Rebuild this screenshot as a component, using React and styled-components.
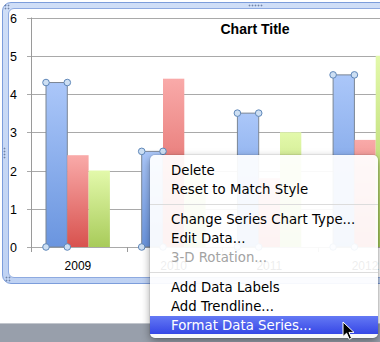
import styled, { createGlobalStyle } from "styled-components"

const GlobalStyle = createGlobalStyle`
    html, body {
        margin: 0;
        padding: 0;
        background: #ffffff;
        overflow: hidden;
    }
    body {
        width: 380px;
        height: 342px;
        font-family: "Liberation Sans", Arial, sans-serif;
    }
`

const Stage = styled.div`
    position: relative;
    width: 380px;
    height: 342px;
    display: flex;
    flex-direction: column;
    overflow: hidden;
`
const Workspace = styled.div`
    flex: 1;
    padding: 2px 0 0 2px;
    background: #ffffff;
`
const ChartFrame = styled.div`
    position: relative;
    width: 420px;
    height: 282px;
    box-sizing: border-box;
    padding: 5px;
    border: 1px solid #7c9ddb;
    border-radius: 9px;
    background: linear-gradient(#cfdef7, #bfd2f3);
`
const ChartArea = styled.div`
    height: 100%;
    box-sizing: border-box;
    border: 1px solid #8eaae0;
    border-radius: 6px;
    background: #ffffff;
    overflow: hidden;

    svg {
        display: block;
    }
`
// little dotted resize grips sitting on the frame border
const Grip = styled.div`
    position: absolute;
    left: ${p => p.$x}px;
    top: ${p => p.$y}px;
    width: ${p => p.$w}px;
    height: ${p => p.$h}px;
    background-image: radial-gradient(circle, #5a6f95 0.8px, transparent 1.1px);
    background-size: 3px 3px;
    opacity: 0.8;
`
const StatusBar = styled.div`
    height: 18px;
    border-top: 1px solid #c2c6cd;
    background: #989fab;
`
const Menu = styled.div`
    position: absolute;
    left: 150px;
    top: 155px;
    width: 228px;
    padding: 6px 0 4px;
    border-radius: 5px;
    background: rgba(255, 255, 255, 0.93);
    box-shadow: 0 3px 9px rgba(0, 0, 0, 0.38), 0 0 0 1px rgba(0, 0, 0, 0.06);
    font-family: "DejaVu Sans", "Liberation Sans", sans-serif;
    font-size: 13.3px;
`
const Item = styled.div`
    height: ${p => (p.$active ? 18 : 19)}px;
    line-height: 19px;
    padding-left: 21px;
    white-space: nowrap;
    color: ${p => (p.$active ? "#ffffff" : p.$disabled ? "#a3a3a3" : "#000000")};
    background: ${p => (p.$active ? "linear-gradient(#6479f4, #3647e6)" : "transparent")};
`
const Separator = styled.div`
    height: 1px;
    margin: 5px 0;
    background: #dcdcdc;
`
const Cursor = styled.svg`
    position: absolute;
    left: 342px;
    top: 321px;
`

const values = {
    blue: [4.3, 2.5, 3.5, 4.5],
    red: [2.4, 4.4, 1.8, 2.8],
    green: [2.0, 2.0, 3.0, 5.0],
}
const fills = { blue: "url(#gBlue)", red: "url(#gRed)", green: "url(#gGreen)" }
const years = ["2009", "2010", "2011", "2012"]
const base = 247
const unit = 38.25
const catW = 95.7
const barW = 21.3
const yOf = v => base - v * unit
const crisp = v => Math.round(v) + 0.5

function Chart() {
    const series = ["blue", "red", "green"]
    return (
        <svg width="406" height="268" viewBox="9 9 406 268">
            <defs>
                <linearGradient id="gBlue" x1="0" y1="0" x2="0" y2="1">
                    <stop offset="0" stopColor="#abc7f9" />
                    <stop offset="1" stopColor="#6a95df" />
                </linearGradient>
                <linearGradient id="gRed" x1="0" y1="0" x2="0" y2="1">
                    <stop offset="0" stopColor="#f9aaa9" />
                    <stop offset="1" stopColor="#d8524e" />
                </linearGradient>
                <linearGradient id="gGreen" x1="0" y1="0" x2="0" y2="1">
                    <stop offset="0" stopColor="#e3f9ab" />
                    <stop offset="1" stopColor="#a8cb5a" />
                </linearGradient>
            </defs>

            {[0, 1, 2, 3, 4, 5, 6].map(v => (
                <g key={v}>
                    <line x1="27" x2="420" y1={crisp(yOf(v))} y2={crisp(yOf(v))} stroke="#a9a9a9" />
                    <text x="17" y={yOf(v) + 5} textAnchor="end" fontSize="12.5" fill="#000">{v}</text>
                </g>
            ))}
            <line x1="31.5" x2="31.5" y1={yOf(6)} y2={base + 4} stroke="#9a9a9a" />
            {[0, 1, 2, 3, 4].map(i => (
                <line key={i} x1={crisp(31 + i * catW)} x2={crisp(31 + i * catW)} y1={base} y2={base + 5} stroke="#9a9a9a" />
            ))}

            <text x="255" y="33.5" textAnchor="middle" fontSize="14" fontWeight="bold" fill="#000">Chart Title</text>

            {years.map((y, i) => {
                const x0 = 31 + i * catW + 15
                return (
                    <g key={y}>
                        {series.map((s, j) => {
                            const t = yOf(values[s][i])
                            return (
                                <rect
                                    key={s}
                                    x={x0 + j * barW}
                                    y={t}
                                    width={barW}
                                    height={base - t}
                                    fill={fills[s]}
                                    stroke={s === "blue" ? "#7b8594" : "none"}
                                />
                            )
                        })}
                        <text x={x0 + barW * 1.5} y="269.5" textAnchor="middle" fontSize="12" fill="#000">{y}</text>
                    </g>
                )
            })}

            {/* selection handles on the selected (blue) series */}
            {years.map((y, i) => {
                const x0 = 31 + i * catW + 15
                const t = yOf(values.blue[i])
                return [[x0, t], [x0 + barW, t], [x0, base], [x0 + barW, base]].map(([cx, cy], k) => (
                    <circle key={y + k} cx={cx} cy={cy} r="3.3" fill="#cddff3" stroke="#5f87b9" />
                ))
            })}
        </svg>
    )
}

export default function App() {
    return (
        <Stage>
            <GlobalStyle />
            <Workspace>
                <ChartFrame>
                    <ChartArea>
                        <Chart />
                    </ChartArea>
                    <Grip $x={1} $y={1} $w={6} $h={6} />
                    <Grip $x={245} $y={1} $w={15} $h={3} />
                    <Grip $x={0} $y={144} $w={3} $h={12} />
                    <Grip $x={2} $y={273} $w={6} $h={6} />
                </ChartFrame>
            </Workspace>
            <StatusBar />
            <Menu>
                <Item>Delete</Item>
                <Item>Reset to Match Style</Item>
                <Separator />
                <Item>Change Series Chart Type...</Item>
                <Item>Edit Data...</Item>
                <Item $disabled>3-D Rotation...</Item>
                <Separator />
                <Item>Add Data Labels</Item>
                <Item>Add Trendline...</Item>
                <Item $active>Format Data Series...</Item>
            </Menu>
            <Cursor width="14" height="20" viewBox="0 0 14 20">
                <path d="M1 1 L1 15.5 L4.6 12.2 L7.2 18.2 L9.6 17.2 L7 11.4 L12 11.4 Z" fill="#000" stroke="#fff" strokeWidth="1" strokeLinejoin="round" />
            </Cursor>
        </Stage>
    )
}
